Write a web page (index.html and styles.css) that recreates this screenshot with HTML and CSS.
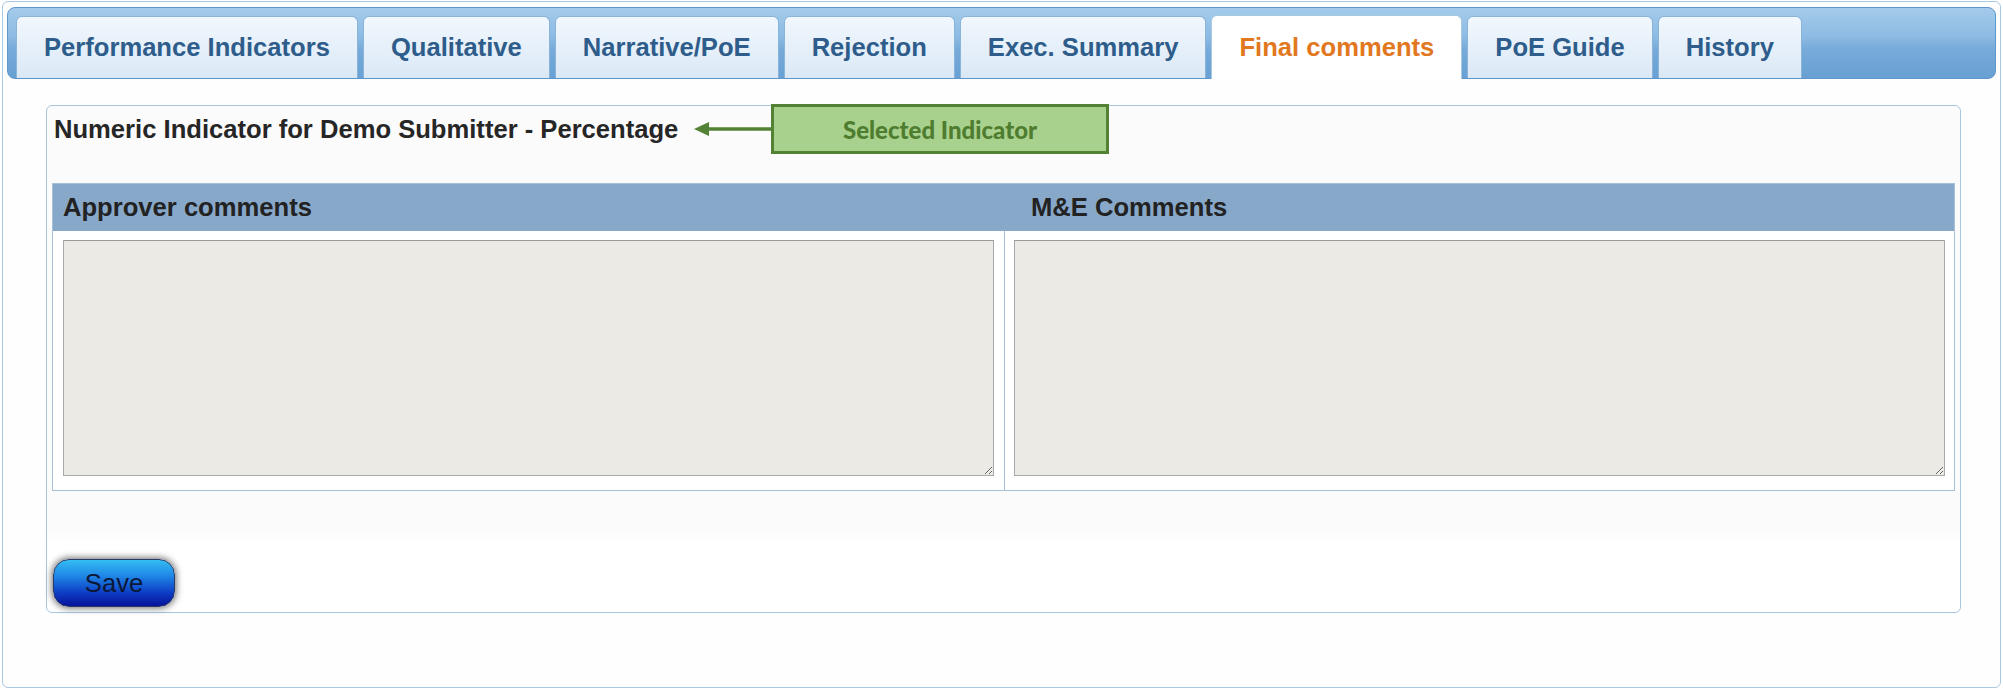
FILE: index.html
```html
<!DOCTYPE html>
<html lang="en">
<head>
<meta charset="utf-8">
<title>Final comments</title>
<link rel="stylesheet" href="styles.css">
</head>
<body>
<div class="frame">
  <nav class="tabbar">
    <a class="tab">Performance Indicators</a>
    <a class="tab">Qualitative</a>
    <a class="tab">Narrative/PoE</a>
    <a class="tab">Rejection</a>
    <a class="tab">Exec. Summary</a>
    <a class="tab tab-active">Final comments</a>
    <a class="tab">PoE Guide</a>
    <a class="tab">History</a>
  </nav>
  <section class="panel">
    <h1 class="indicator-title">Numeric Indicator for Demo Submitter - Percentage</h1>
    <div class="callout">
      <svg class="callout-arrow" width="77" height="50" viewBox="0 0 77 50">
        <line x1="12" y1="25" x2="77" y2="25" stroke="#548235" stroke-width="3.5"/>
        <polygon points="0,25 15,18 15,32" fill="#548235"/>
      </svg>
      <div class="callout-box">Selected Indicator</div>
    </div>
    <div class="comments">
      <div class="comments-head">
        <div class="head-cell head-approver">Approver comments</div>
        <div class="head-cell">M&amp;E Comments</div>
      </div>
      <div class="comments-body">
        <div class="cell"><textarea class="comment-input"></textarea></div>
        <div class="cell cell-right"><textarea class="comment-input"></textarea></div>
      </div>
    </div>
    <button class="save">Save</button>
  </section>
</div>
</body>
</html>
```

FILE: styles.css
```css
html, body {
  margin: 0;
  padding: 0;
  background: #ffffff;
}

body {
  font-family: "Liberation Sans", Arial, sans-serif;
}

.frame {
  margin: 1px 2px 0 2px;
  height: 687px;
  box-sizing: border-box;
  border: 1px solid #a9c8e2;
  border-radius: 6px;
  padding: 5px 4px 0 4px;
  background: #fefefe;
}

/* ---------- tabs ---------- */
.tabbar {
  display: flex;
  align-items: flex-end;
  gap: 5px;
  height: 72px;
  box-sizing: border-box;
  padding: 0 8px;
  border: 1px solid #5f97cb;
  border-radius: 8px;
  background: linear-gradient(180deg, #a4cbea 0%, #8dbbe3 40%, #76aad9 60%, #68a0d3 100%);
}

.tab {
  display: flex;
  align-items: center;
  height: 62px;
  box-sizing: border-box;
  padding: 0 27px;
  border: 1px solid #8ab5da;
  border-bottom: none;
  border-radius: 6px 6px 0 0;
  background: linear-gradient(180deg, #f1f7fd 0%, #e6f0fa 50%, #dae8f5 100%);
  color: #2e5d8b;
  font-size: 25.6px;
  font-weight: bold;
  white-space: nowrap;
  text-decoration: none;
}

.tab-active {
  height: 64px;
  margin-bottom: -1px;
  background: #ffffff;
  border-color: #a9c8e2;
  color: #e1781f;
}

/* ---------- panel ---------- */
.panel {
  position: relative;
  margin: 26px 35px 0 39px;
  padding: 0 5px 5px 5px;
  border: 1px solid #a9c6df;
  border-radius: 6px;
  background: linear-gradient(180deg, #fbfbfb 0%, #fbfbfb 84%, #ffffff 86%, #ffffff 100%);
}

.indicator-title {
  margin: 0;
  padding: 7px 3px 0 2px;
  line-height: 32px;
  font-size: 25.6px;
  font-weight: bold;
  color: #262626;
}

/* callout annotation */
.callout {
  position: absolute;
  left: 647px;
  top: -2px;
  display: flex;
  align-items: center;
}

.callout-arrow {
  display: block;
}

.callout-box {
  width: 338px;
  height: 50px;
  box-sizing: border-box;
  border: 3px solid #548235;
  background: #a9d18e;
  display: flex;
  align-items: center;
  justify-content: center;
  font-family: Lato, "Open Sans", sans-serif;
  font-weight: 900;
  font-size: 24px;
  color: #4f7d30;
}

/* ---------- comments table ---------- */
.comments {
  margin-top: 38px;
  border: 1px solid #a8c0d7;
}

.comments-head {
  display: flex;
  height: 47px;
  background: #88a8c9;
}

.head-cell {
  display: flex;
  align-items: center;
  padding: 0 10px;
  font-size: 25.6px;
  font-weight: bold;
  color: #222222;
}

.head-approver {
  width: 968px;
  box-sizing: border-box;
}

.comments-body {
  display: grid;
  grid-template-columns: 1fr 1fr;
  background: #ffffff;
}

.cell {
  padding: 9px 10px 14px 10px;
}

.cell-right {
  border-left: 1px solid #a8c0d7;
  padding: 9px 9px 14px 9px;
}

.comment-input {
  display: block;
  width: 100%;
  height: 236px;
  box-sizing: border-box;
  margin: 0;
  border: 1px solid #a9a9a9;
  border-top-color: #9a9a9a;
  background: #ebeae5;
  font-family: "Liberation Sans", Arial, sans-serif;
  font-size: 16px;
}

/* ---------- save button ---------- */
.save {
  display: block;
  margin: 68px 0 0 1px;
  width: 122px;
  height: 48px;
  border: 1px solid #2a3a66;
  border-radius: 16px;
  background: linear-gradient(180deg, #34bdf3 0%, #1f86e6 35%, #0d3fc6 70%, #07129a 100%);
  box-shadow: 0 0 7px 1px rgba(0, 0, 0, 0.6);
  color: #0c1838;
  font-family: "Liberation Sans", Arial, sans-serif;
  font-size: 25.6px;
  padding: 0;
}
```
